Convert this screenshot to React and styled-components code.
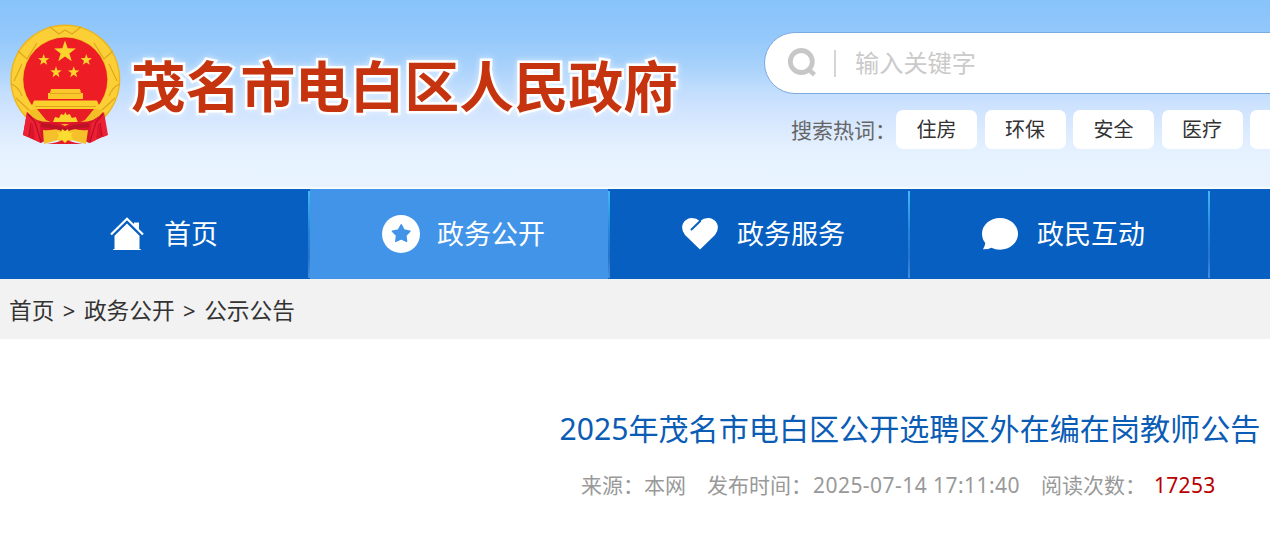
import React from "react";
import styled, { createGlobalStyle } from "styled-components";

//#region Styled Components
const GlobalStyle = createGlobalStyle`
  * {
    box-sizing: border-box;
  }
  body {
    margin: 0;
    background: #fff;
    font-family: "Noto Sans", "Noto Sans CJK SC", sans-serif;
    overflow: hidden;
  }
`;
const Page = styled.div`
  width: 100%;
  height: 547px;
  overflow: hidden;
  white-space: nowrap;
`;
const Header = styled.header`
  display: flex;
  height: 189px;
  overflow: hidden;
  background: linear-gradient(#88c3fa 0, #93c8fb 35px, #a6d1fb 65px, #bfdcfd 88px, #cfe3fe 108px, #dcebfe 132px, #e6f2ff 155px, #e9f3ff 186px, #fff 189px);
`;
const Brand = styled.div`
  display: flex;
  flex: 0 0 764px;
  padding: 24px 0 0 10px;
`;
const SiteName = styled.h1`
  margin: 20px 0 0 10px;
  font-family: "Noto Sans CJK SC", sans-serif;
  font-size: 54.7px;
  font-weight: 700;
  line-height: 80px;
  color: #c6340f;
  -webkit-text-stroke: 5px #fff;
  paint-order: stroke fill;
  filter: drop-shadow(0 0 3px rgba(255, 255, 255, 0.6));
`;
const SearchArea = styled.div`
  flex: 0 0 640px;
  padding-top: 32px;
`;
const SearchBox = styled.div`
  display: flex;
  align-items: center;
  height: 62px;
  padding-left: 22px;
  border: 1px solid #7baae0;
  border-radius: 31px;
  background: #fff;
`;
const SearchDivider = styled.span`
  width: 2px;
  height: 27px;
  margin: 0 18px 0 17px;
  background: #d5d5d5;
`;
const Placeholder = styled.span`
  padding: 0 0 3px 1px;
  font-size: 24.2px;
  color: #cacaca;
`;
const HotWords = styled.div`
  display: flex;
  align-items: center;
  height: 39px;
  margin-top: 16px;
  padding-left: 27px;
`;
const HotLabel = styled.span`
  width: 105px;
  padding-bottom: 2px;
  font-size: 21px;
  color: #666;
`;
const HotWord = styled.a`
  flex: none;
  width: 81px;
  height: 39px;
  margin-right: 7.5px;
  border-radius: 7px;
  background: #fff;
  color: #333;
  font-size: 20px;
  line-height: 40px;
  text-align: center;
`;
const Nav = styled.nav`
  display: flex;
  height: 90px;
  padding-left: 10px;
  overflow: hidden;
  background: #065fc1;
`;
const NavItem = styled.a`
  display: flex;
  flex: 0 0 300px;
  align-items: center;
  padding-left: ${props => (props.$home ? "100px" : "72px")};
  color: #fff;
  font-size: 27px;
  background: ${props => (props.$active ? "#4294e8" : "transparent")};
`;
const NavText = styled.span`
  flex: 1;
  margin-left: ${props => (props.$home ? "20px" : "17px")};
  padding-bottom: 3px;
`;
const NavLine = styled.span`
  align-self: stretch;
  width: 2px;
  padding: 2px 0 1px;
  background: linear-gradient(#42b9f3, #2587d8 45%, #2773cb 75%, #468ddd) content-box, #065fc1;
`;
const Crumbs = styled.div`
  display: flex;
  align-items: center;
  height: 60px;
  padding: 1px 0 0 9px;
  background: #f2f2f2;
  color: #333;
  font-size: 22.7px;
`;
const CrumbArrow = styled.span`
  width: 29.5px;
  padding-top: 1px;
  text-align: center;
  font-size: 22px;
`;
const Article = styled.main`
  display: flex;
  flex-direction: column;
  align-items: center;
  width: 1820px;
  padding-top: 67px;
`;
const Title = styled.h2`
  margin: 0;
  font-size: 30.1px;
  font-weight: 400;
  line-height: 46px;
  color: #0b5cb5;
`;
const Meta = styled.div`
  display: flex;
  align-items: center;
  width: 658px;
  height: 32px;
  margin-top: 16px;
  color: #999;
  font-size: 21px;
`;
const MetaLabel = styled.span`
  margin-left: ${props => props.$gap || 0}px;
`;
const MetaDate = styled.span`
  padding-top: 2px;
  margin-left: 1px;
  letter-spacing: 0.45px;
`;
const Count = styled.span`
  padding-top: 2px;
  margin-left: 8px;
  letter-spacing: 0.3px;
  color: #b80000;
`;
//#endregion

const starPoints = (cx, cy, r, inner = 0.4) =>
  Array.from({ length: 10 }, (_, i) => {
    const radius = i % 2 ? r * inner : r;
    const angle = (Math.PI / 5) * i - Math.PI / 2;
    return `${cx + radius * Math.cos(angle)},${cy + radius * Math.sin(angle)}`;
  }).join(" ");

const Emblem = () => (
  <svg width="111" height="122" viewBox="0 0 111 122">
    <circle cx="55.3" cy="55.5" r="55" fill="#edb51d" />
    <circle cx="55.3" cy="55.5" r="48" fill="none" stroke="#fccf36" strokeWidth="11" />
    <g fill="none" stroke="#dda51b" strokeWidth="1.1">
      <path d="M8 27l9 8 10-16M103 27l-9 8-10-16M40 3l9 7 6-4 7 4 9-7" />
      <path d="M1 60q7 2 11 12M110 60q-7 2-11 12M12 40L4 57M99 40l8 17M6 74l13 12M105 74L92 86" />
    </g>
    <circle cx="55.3" cy="55.5" r="42" fill="#ee1c25" />
    <g fill="#fbd32d">
      <polygon points={starPoints(55, 28, 11.5)} />
      <polygon points={starPoints(33.7, 36, 6)} />
      <polygon points={starPoints(76.3, 36, 6)} />
      <polygon points={starPoints(46, 48.3, 6)} />
      <polygon points={starPoints(63.7, 48.3, 6)} />
    </g>
    <path d="M41 65h29l1 4h2v6H38v-6h2z" fill="#fbc62c" />
    <path d="M40 69.500h31" stroke="#e0a51f" />
    <path d="M24 76.500h63l5 12-8-3.500H27l-8 3.500z" fill="#fbd02c" />
    <path d="M25 82.500h61" stroke="#e0a51f" />
    {/* lower wheel and drapery */}
    <path d="M28 85h55l-7 16H35z" fill="#e81d25" />
    <path d="M19 86l8-1 9 11 9 4h21l9-4 9-11 8 1-5 18H24z" fill="#f3bf27" />
    <path d="M43 98l2-5 4 1 2-4 3 1 1.300-3 1.500 3 3-1 2 4 4-1 2 5z" fill="#fbd32d" />
    <path d="M17 88q7 10 23 10 8 0 15 4 7-4 15-4 16 0 23-10l4 23-18 8-12-6H43l-12 6-18-8z" fill="#d9152a" />
    <path d="M17 88l-4 23 5 2 5-14 2 17 6 3-1-19zM94 88l4 23-5 2-5-14-2 17-6 3 1-19z" fill="#ed2034" />
    <path d="M18 90l7 8 6 20M93 90l-7 8-6 20M21 99l-2 13M90 99l2 13" stroke="#b80f25" strokeWidth="1.200" fill="none" />
    <path d="M33 106q11 1 17-3 5 3 11 0 6 4 17 3l-2 14-14-4-7 4-7-4-14 4z" fill="#f5c02a" />
    <path d="M37 120q10-1 18-5 8 4 18 5z" fill="#e21c29" />
    <path d="M31 101q13 1 24 5 11-4 24-5" fill="none" stroke="#bb1225" strokeWidth="4" />
    <path d="M47 108l4 1 1-4 3 2 3-2 1 4 4-1-2 4 2 3-5 1-3 3-3-3-5-1 2-3z" fill="#fddc32" />
  </svg>
);

const SearchIcon = () => (
  <svg width="30" height="30" viewBox="0 0 30 30" fill="none" stroke="#c7c7c7">
    <circle cx="14.3" cy="13.5" r="11" strokeWidth="4.8" />
    <path d="M21.500 21.500l6 5.200" strokeWidth="4.500" />
  </svg>
);

const HomeIcon = () => (
  <svg width="34" height="34" viewBox="0 0 34 34">
    <path d="M1 17.5L17 1.8 33 17.5" fill="none" stroke="#fff" strokeWidth="2.2" />
    <path d="M24 5.5h5v8l-5-4.8z" fill="#fff" />
    <path d="M17 6.5l12.5 12.3v13.5H31V33H3v-.7h1.5V18.8z" fill="#fff" />
  </svg>
);

const StarIcon = () => (
  <svg width="38" height="38" viewBox="0 0 38 38">
    <circle cx="19" cy="19" r="19" fill="#fff" />
    <polygon points={starPoints(19.2, 19, 9.2, 0.53)} fill="#4294e8" stroke="#4294e8" strokeWidth="1.5" strokeLinejoin="round" />
  </svg>
);

const HeartIcon = () => (
  <svg width="38" height="34" viewBox="0 0 38 34">
    <path d="M18 32.5L3 18Q-1.500 12 1 6.500 4 1 10 1q4.500 0 8 3.200Q21.500 1 26 1q6 0 9 5.500 2.500 5.500-2 11.500z" fill="#fff" />
    <path d="M9.500 12.500L18 4.200" stroke="#065fc1" strokeWidth="2" strokeLinecap="round" />
  </svg>
);

const ChatIcon = () => (
  <svg width="38" height="34" viewBox="0 0 38 34">
    <path d="M18 1c10 0 18 7 18 15.800S28 32.700 18 32.700q-5 0-8.500-2Q6 32.500 1 32.300 3 29 3.300 26 0 22.300 0 16.800C0 8 8 1 18 1z" fill="#fff" />
  </svg>
);

const navItems = [
  { text: "首页", Icon: HomeIcon, home: true },
  { text: "政务公开", Icon: StarIcon, active: true },
  { text: "政务服务", Icon: HeartIcon },
  { text: "政民互动", Icon: ChatIcon }
];
const hotWords = ["住房", "环保", "安全", "医疗", ""];

const App = () => (
  <Page>
    <GlobalStyle />
    <Header>
      <Brand>
        <Emblem />
        <SiteName>茂名市电白区人民政府</SiteName>
      </Brand>
      <SearchArea>
        <SearchBox>
          <SearchIcon />
          <SearchDivider />
          <Placeholder>输入关键字</Placeholder>
        </SearchBox>
        <HotWords>
          <HotLabel>搜索热词：</HotLabel>
          {hotWords.map((word, i) => (
            <HotWord key={i}>{word}</HotWord>
          ))}
        </HotWords>
      </SearchArea>
    </Header>
    <Nav>
      {navItems.map(({ text, Icon, home, active }) => (
        <NavItem key={text} $home={home} $active={active}>
          <Icon />
          <NavText $home={home}>{text}</NavText>
          <NavLine />
        </NavItem>
      ))}
    </Nav>
    <Crumbs>
      <span>首页</span>
      <CrumbArrow>&gt;</CrumbArrow>
      <span>政务公开</span>
      <CrumbArrow>&gt;</CrumbArrow>
      <span>公示公告</span>
    </Crumbs>
    <Article>
      <Title>2025年茂名市电白区公开选聘区外在编在岗教师公告</Title>
      <Meta>
        <MetaLabel>来源：本网</MetaLabel>
        <MetaLabel $gap={21}>发布时间：</MetaLabel>
        <MetaDate>2025-07-14 17:11:40</MetaDate>
        <MetaLabel $gap={21}>阅读次数：</MetaLabel>
        <Count>17253</Count>
      </Meta>
    </Article>
  </Page>
);

export default App;
